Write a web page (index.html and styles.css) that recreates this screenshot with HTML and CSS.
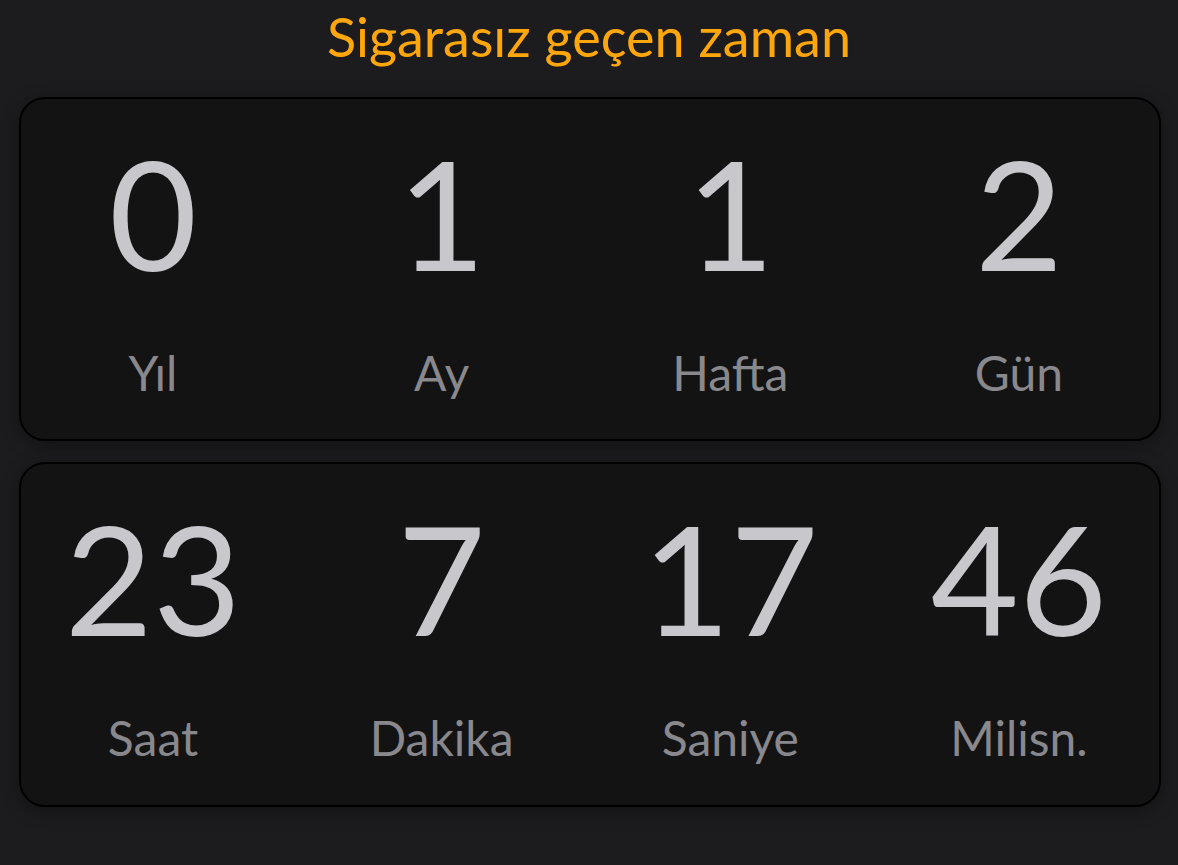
FILE: index.html
```html
<!DOCTYPE html>
<html lang="tr">
<head>
    <meta charset="UTF-8">
    <meta name="viewport" content="width=device-width, initial-scale=1.0">
    <title>Sigarasız geçen zaman</title>
    <link rel="stylesheet" href="styles.css">
</head>

<body>
    <h1 class="title">Sigarasız geçen zaman</h1>

    <div class="counter-card">
        <div class="unit"><span class="value">0</span><span class="label">Yıl</span></div>
        <div class="unit"><span class="value">1</span><span class="label">Ay</span></div>
        <div class="unit"><span class="value">1</span><span class="label">Hafta</span></div>
        <div class="unit"><span class="value">2</span><span class="label">Gün</span></div>
    </div>

    <div class="counter-card">
        <div class="unit"><span class="value">23</span><span class="label">Saat</span></div>
        <div class="unit"><span class="value">7</span><span class="label">Dakika</span></div>
        <div class="unit"><span class="value">17</span><span class="label">Saniye</span></div>
        <div class="unit"><span class="value">46</span><span class="label">Milisn.</span></div>
    </div>
</body>

</html>
```

FILE: styles.css
```css
body {
    margin: 0;
    background: #1c1c1e;
    font-family: Lato, 'Noto Sans', sans-serif;
    min-height: 100vh;
}

.title {
    margin: 5px 0 27px;
    text-align: center;
    color: #ffa60a;
    font-size: 54px;
    font-weight: 400;
    line-height: 1.2;
}

.counter-card {
    display: grid;
    grid-template-columns: repeat(4, 200px);
    justify-content: space-between;
    margin: 0 17px 21px 19px;
    padding: 37px 40px 38px 32px;
    background: #131314;
    border: 2px solid #000;
    border-radius: 26px;
    box-shadow: 0 4px 18px rgba(0, 0, 0, 0.35);
}

.unit {
    display: flex;
    flex-direction: column;
    align-items: center;
}

.value {
    color: #c7c7cc;
    font-size: 152px;
    line-height: 152px;
}

.label {
    margin-top: 56px;
    color: #88888d;
    font-size: 48px;
    line-height: 1.2;
}
```
